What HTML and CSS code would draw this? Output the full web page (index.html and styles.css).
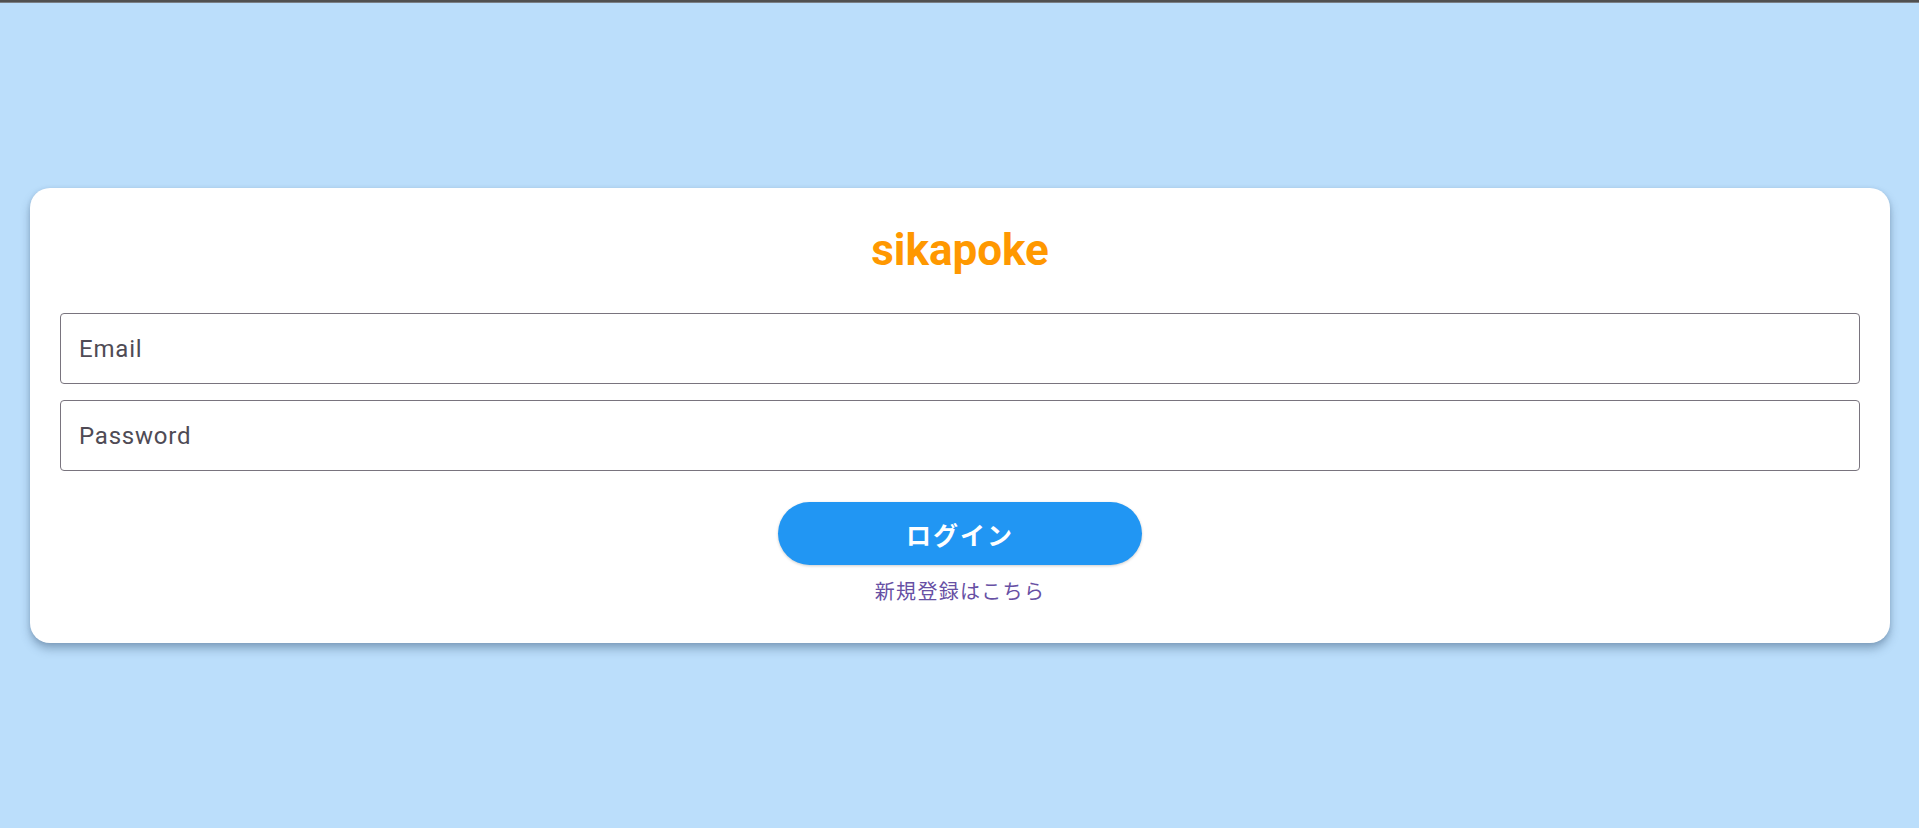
FILE: index.html
```html
<!DOCTYPE html>
<html lang="ja">
<head>
<meta charset="utf-8">
<title>sikapoke</title>
<link rel="stylesheet" href="styles.css">
</head>
<body>
<div class="topbar"></div>
<main class="page">
  <section class="card">
    <h1 class="title">sikapoke</h1>
    <div class="field"><span class="placeholder">Email</span></div>
    <div class="field"><span class="placeholder">Password</span></div>
    <button class="login">ログイン</button>
    <a class="signup" href="#">新規登録はこちら</a>
  </section>
</main>
</body>
</html>
```

FILE: styles.css
```css
* { box-sizing: border-box; }
html, body { margin: 0; padding: 0; height: 100%; }
body {
  background: #bbdefb;
  font-family: Roboto, "Noto Sans CJK JP", sans-serif;
  display: flex;
  flex-direction: column;
}
.topbar {
  height: 3px;
  background: #505050;
  border-bottom: 1px solid #7a7f85;
  flex: none;
}
.page {
  flex: 1;
  display: flex;
  align-items: center;
  padding: 0 29px 0 30px;
}
.card {
  width: 100%;
  background: #fff;
  border-radius: 20px;
  padding: 36px 30px 38px;
  display: flex;
  flex-direction: column;
  align-items: center;
  box-shadow: 0 6px 10px rgba(40, 70, 100, 0.35), 0 1px 4px rgba(40, 70, 100, 0.15);
}
.title {
  margin: 0 0 37px;
  font-size: 44px;
  line-height: 52px;
  font-weight: 700;
  color: #ff9800;
  letter-spacing: 0;
}
.field {
  width: 100%;
  height: 71px;
  border: 1px solid #79747e;
  border-radius: 4px;
  display: flex;
  align-items: center;
  padding-left: 18px;
  margin-bottom: 16px;
}
.field:last-of-type { margin-bottom: 0; }
.placeholder {
  font-size: 24px;
  color: #4f4b55;
  letter-spacing: 0.8px;
}
.login {
  margin-top: 31px;
  width: 364px;
  height: 63px;
  border: none;
  border-radius: 32px;
  background: #2196f3;
  color: #fff;
  font-family: "Noto Sans CJK JP", sans-serif;
  font-size: 25px;
  font-weight: 700;
  letter-spacing: 2px;
  box-shadow: 0 1px 3px rgba(0, 0, 0, 0.2);
}
.signup {
  margin-top: 12px;
  font-family: "Noto Sans CJK JP", sans-serif;
  font-size: 20px;
  line-height: 28px;
  letter-spacing: 1.3px;
  color: #6750a4;
  text-decoration: none;
}
```
